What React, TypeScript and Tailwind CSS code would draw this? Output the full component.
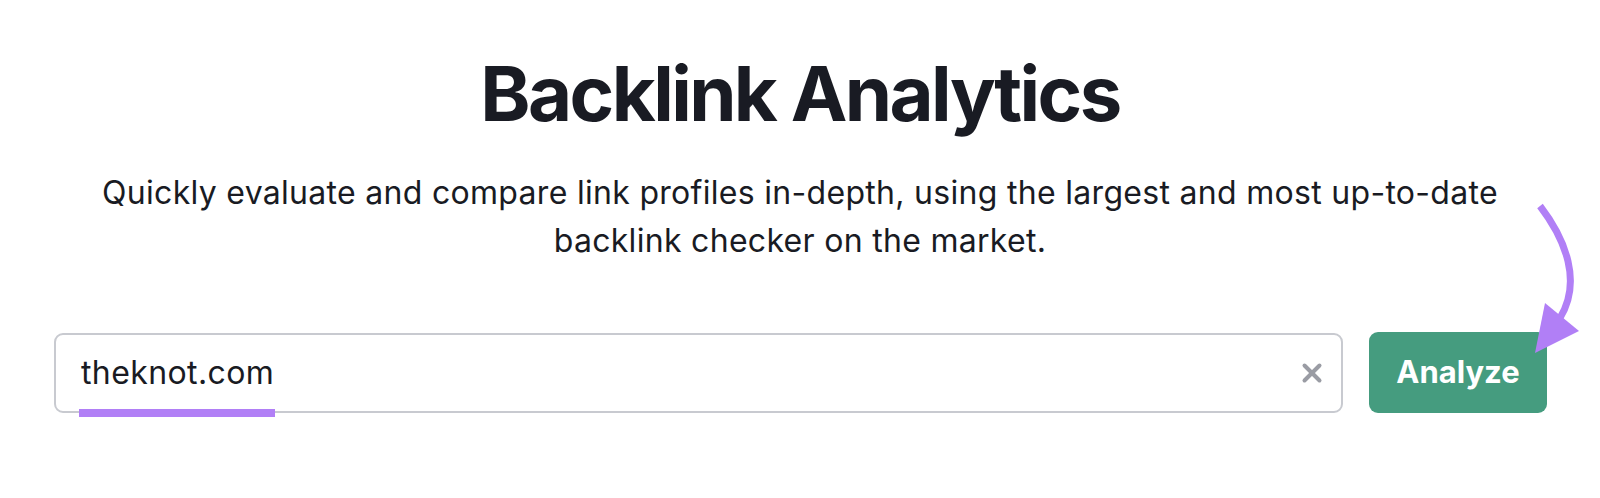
import { X } from 'lucide-react'

export default function App() {
  return (
    <div
      className="relative w-[1600px] h-[498px] bg-white flex flex-col items-center text-[#191b23]"
      style={{ fontFamily: 'Inter, "Noto Sans", sans-serif' }}
    >
      {/* Heading */}
      <h1 className="mt-[55px] text-[76px] leading-none font-bold tracking-[-2.6px]">
        Backlink Analytics
      </h1>
      <p className="mt-[38px] text-[32px] leading-[48px] text-center tracking-[0.3px]">
        Quickly evaluate and compare link profiles in-depth, using the largest and most up-to-date
        <br />
        backlink checker on the market.
      </p>

      {/* Search */}
      <div className="mt-[67px] w-full flex items-center gap-[26px] pl-[54px]">
        <div className="relative w-[1289px] h-[80px] rounded-[9px] border-2 border-[#c8cad0] flex items-center pl-[25px] pr-[14px]">
          <span className="text-[32px] tracking-[0.4px] text-[#191b23] flex-1">theknot.com</span>
          <X className="w-[30px] h-[30px] text-[#9a9ca4]" strokeWidth={3.2} />
          <div className="absolute left-[23px] top-[74px] w-[196px] h-[8px] bg-[#b17ff6]" />
        </div>
        <button className="w-[178px] h-[81px] rounded-[9px] bg-[#459c7f] text-white text-[31px] font-bold">
          Analyze
        </button>
      </div>

      {/* Arrow annotation */}
      <svg className="absolute left-0 top-0 pointer-events-none" width="1600" height="498" viewBox="0 0 1600 498">
        <path
          d="M1540 206 C1566 240 1582 282 1560 318"
          fill="none"
          stroke="#b17ff6"
          strokeWidth="7"
          strokeLinecap="butt"
        />
        <polygon points="1545,303 1579,331 1535,353" fill="#b17ff6" />
      </svg>
    </div>
  )
}
